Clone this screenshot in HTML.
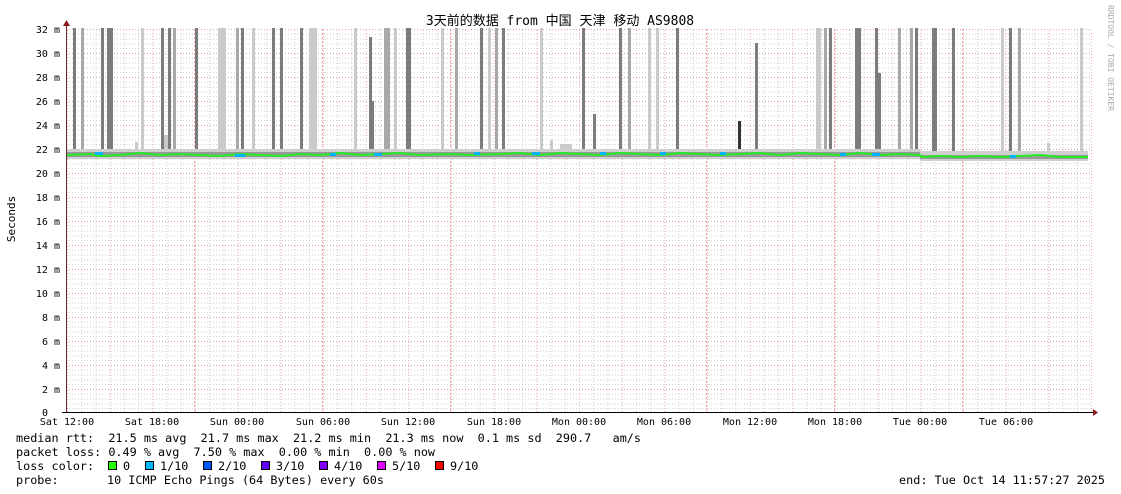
<!DOCTYPE html>
<html><head><meta charset="utf-8"><style>
body{margin:0;background:#fff;}
svg{display:block;font-family:"DejaVu Sans Mono","Liberation Mono","Noto Sans CJK SC",monospace;}
.pre{white-space:pre;}
</style></head><body>
<svg width="1121" height="494" viewBox="0 0 1121 494" xmlns="http://www.w3.org/2000/svg">
<defs>
<pattern id="vmin" x="67" y="0" width="14.222" height="494" patternUnits="userSpaceOnUse"><line x1="0.5" y1="0" x2="0.5" y2="494" stroke="#ccc" stroke-dasharray="1,2"/></pattern>
<pattern id="hmin" x="0" y="29" width="1121" height="4.8" patternUnits="userSpaceOnUse"><line x1="0" y1="0.5" x2="1121" y2="0.5" stroke="#ccc" stroke-dasharray="1,2"/></pattern>
<pattern id="hmaj" x="0" y="29" width="1121" height="24" patternUnits="userSpaceOnUse"><line x1="0" y1="0.5" x2="1121" y2="0.5" stroke="#e8a0a0" stroke-dasharray="1,2"/></pattern>
<pattern id="vmaj" x="67" y="0" width="42.667" height="494" patternUnits="userSpaceOnUse"><line x1="0.5" y1="0" x2="0.5" y2="494" stroke="#eeb0b0" stroke-dasharray="1,2"/></pattern>
</defs>
<rect width="1121" height="494" fill="#fff"/>
<rect x="67" y="29" width="1025" height="383" fill="url(#vmin)"/>
<rect x="67" y="29" width="1025" height="383" fill="url(#hmin)"/>
<rect x="67" y="29" width="1025" height="383" fill="url(#hmaj)"/>
<rect x="67" y="29" width="1025" height="383" fill="url(#vmaj)"/>
<g stroke="#f2a0a0" stroke-dasharray="2,2">
<line x1="194.5" y1="29" x2="194.5" y2="412"/><line x1="322.5" y1="29" x2="322.5" y2="412"/><line x1="450.5" y1="29" x2="450.5" y2="412"/><line x1="706.5" y1="29" x2="706.5" y2="412"/><line x1="834.5" y1="29" x2="834.5" y2="412"/><line x1="962.5" y1="29" x2="962.5" y2="412"/>
</g>
<g fill="#cacaca">
<rect x="141" y="28" width="3" height="124"/><rect x="218" y="28" width="8" height="124"/><rect x="252" y="28" width="3" height="124"/><rect x="309" y="28" width="8" height="124"/><rect x="354" y="28" width="3" height="124"/><rect x="394" y="28" width="3" height="124"/><rect x="441" y="28" width="3" height="124"/><rect x="488" y="28" width="3" height="124"/><rect x="540" y="28" width="3" height="124"/><rect x="648" y="28" width="3" height="124"/><rect x="656" y="28" width="3" height="124"/><rect x="816" y="28" width="5" height="124"/><rect x="1001" y="28" width="3" height="124"/><rect x="1080" y="28" width="3" height="124"/><rect x="164" y="135" width="4" height="17"/><rect x="135" y="142" width="3" height="10"/><rect x="550" y="140" width="3" height="12"/><rect x="560" y="144" width="12" height="8"/><rect x="1047" y="143" width="3" height="9"/>
</g>
<g fill="#a8a8a8">
<rect x="81" y="28" width="3" height="124"/><rect x="173" y="28" width="3" height="124"/><rect x="236" y="28" width="3" height="124"/><rect x="384" y="28" width="6" height="124"/><rect x="455" y="28" width="3" height="124"/><rect x="495" y="28" width="3" height="124"/><rect x="628" y="28" width="3" height="124"/><rect x="824" y="28" width="3" height="124"/><rect x="910" y="28" width="3" height="124"/><rect x="1018" y="28" width="3" height="124"/><rect x="898" y="28" width="3" height="124"/>
</g>
<g fill="#7c7c7c">
<rect x="73" y="28" width="3" height="124"/><rect x="101" y="28" width="3" height="124"/><rect x="107" y="28" width="6" height="124"/><rect x="161" y="28" width="3" height="124"/><rect x="168" y="28" width="3" height="124"/><rect x="195" y="28" width="3" height="124"/><rect x="241" y="28" width="3" height="124"/><rect x="272" y="28" width="3" height="124"/><rect x="280" y="28" width="3" height="124"/><rect x="300" y="28" width="3" height="124"/><rect x="369" y="37" width="3" height="115"/><rect x="371" y="101" width="3" height="51"/><rect x="406" y="28" width="5" height="124"/><rect x="480" y="28" width="3" height="124"/><rect x="502" y="28" width="3" height="124"/><rect x="582" y="28" width="3" height="124"/><rect x="593" y="114" width="3" height="38"/><rect x="619" y="28" width="3" height="124"/><rect x="676" y="28" width="3" height="124"/><rect x="755" y="43" width="3" height="109"/><rect x="829" y="28" width="3" height="124"/><rect x="855" y="28" width="6" height="124"/><rect x="875" y="28" width="3" height="124"/><rect x="878" y="73" width="3" height="79"/><rect x="915" y="28" width="3" height="124"/><rect x="932" y="28" width="5" height="124"/><rect x="952" y="28" width="3" height="124"/><rect x="1009" y="28" width="3" height="124"/>
</g>
<rect x="738" y="121" width="3" height="31" fill="#333"/>
<rect x="67" y="149" width="853" height="10" fill="#cfcfcf"/>
<rect x="920" y="151" width="168" height="10" fill="#cfcfcf"/>
<rect x="67" y="152" width="853" height="5" fill="#999"/>
<rect x="920" y="155" width="168" height="4" fill="#999"/>
<polyline fill="none" stroke="#22ee22" stroke-width="2" points="67,155 90,154 100,156 120,155 140,153 160,155 180,154 200,155 220,156 240,154 260,155 280,156 300,154 320,155 340,153 360,155 380,154 400,153 420,155 450,154 470,155 500,154 520,153 540,155 560,153 580,154 600,155 620,153 640,154 660,155 680,153 700,154 720,155 740,154 760,153 780,155 800,153 820,154 840,155 860,153 880,155 900,154 920,155 922,157 940,156 960,157 980,156 1000,157 1020,156 1040,155 1060,157 1088,157"/>
<g fill="#00b4ff">
<rect x="95" y="152" width="8" height="3"/><rect x="235" y="154" width="10" height="3"/><rect x="330" y="153" width="6" height="3"/><rect x="374" y="153" width="8" height="3"/><rect x="474" y="152" width="6" height="3"/><rect x="532" y="152" width="8" height="3"/><rect x="600" y="152" width="6" height="3"/><rect x="660" y="152" width="6" height="3"/><rect x="720" y="152" width="6" height="3"/><rect x="840" y="153" width="6" height="3"/><rect x="872" y="153" width="8" height="3"/><rect x="1010" y="155" width="6" height="3"/>
</g>
<line x1="66.5" y1="24" x2="66.5" y2="413" stroke="#6b2a2a"/>
<line x1="62" y1="412.5" x2="1094" y2="412.5" stroke="#000"/>
<polygon points="63,26 70,26 66.5,20" fill="#8b1a1a"/>
<polygon points="1093,409 1093,416 1098,412.5" fill="#8b1a1a"/>
<g font-size="10" fill="#000" text-anchor="end">
<text x="60" y="33">32 m</text><text x="60" y="57">30 m</text><text x="60" y="81">28 m</text><text x="60" y="105">26 m</text><text x="60" y="129">24 m</text><text x="60" y="153">22 m</text><text x="60" y="177">20 m</text><text x="60" y="201">18 m</text><text x="60" y="225">16 m</text><text x="60" y="249">14 m</text><text x="60" y="273">12 m</text><text x="60" y="297">10 m</text><text x="60" y="321">8 m</text><text x="60" y="345">6 m</text><text x="60" y="369">4 m</text><text x="60" y="393">2 m</text><text x="48" y="416">0</text>
</g>
<g font-size="10" fill="#000" text-anchor="middle">
<text x="67" y="425">Sat 12:00</text><text x="152" y="425">Sat 18:00</text><text x="237" y="425">Sun 00:00</text><text x="323" y="425">Sun 06:00</text><text x="408" y="425">Sun 12:00</text><text x="494" y="425">Sun 18:00</text><text x="579" y="425">Mon 00:00</text><text x="664" y="425">Mon 06:00</text><text x="750" y="425">Mon 12:00</text><text x="835" y="425">Mon 18:00</text><text x="920" y="425">Tue 00:00</text><text x="1006" y="425">Tue 06:00</text>
</g>
<text x="560" y="25" font-size="13" text-anchor="middle" fill="#000">3天前的数据 from 中国 天津 移动 AS9808</text>
<text transform="translate(15,219) rotate(-90)" font-size="11" text-anchor="middle" fill="#000">Seconds</text>
<text transform="translate(1108,5) rotate(90)" font-size="8" fill="#aaa">RRDTOOL / TOBI OETIKER</text>
<g font-size="11.8" fill="#000">
<text class="pre" x="16" y="442">median rtt:  21.5 ms avg  21.7 ms max  21.2 ms min  21.3 ms now  0.1 ms sd  290.7   am/s</text>
<text class="pre" x="16" y="456">packet loss: 0.49 % avg  7.50 % max  0.00 % min  0.00 % now</text>
<text x="16" y="470">loss color:</text>
<text x="123" y="470">0</text><text x="160" y="470">1/10</text><text x="218" y="470">2/10</text><text x="276" y="470">3/10</text><text x="334" y="470">4/10</text><text x="392" y="470">5/10</text><text x="450" y="470">9/10</text>
<text x="16" y="484">probe:</text>
<text x="107" y="484">10 ICMP Echo Pings (64 Bytes) every 60s</text>
<text x="1105" y="484" text-anchor="end">end: Tue Oct 14 11:57:27 2025</text>
</g>
<g stroke="#000">
<rect x="108.5" y="461.5" width="8" height="8" fill="#26ff00"/>
<rect x="145.5" y="461.5" width="8" height="8" fill="#00b8ff"/>
<rect x="203.5" y="461.5" width="8" height="8" fill="#0059ff"/>
<rect x="261.5" y="461.5" width="8" height="8" fill="#5e00ff"/>
<rect x="319.5" y="461.5" width="8" height="8" fill="#7e00ff"/>
<rect x="377.5" y="461.5" width="8" height="8" fill="#dd00ff"/>
<rect x="435.5" y="461.5" width="8" height="8" fill="#ff0000"/>
</g>
</svg>
</body></html>
